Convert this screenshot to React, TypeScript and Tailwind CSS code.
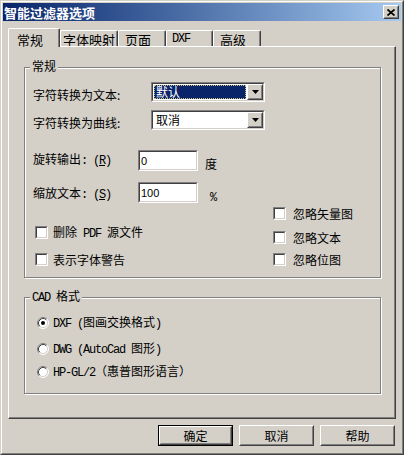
import React from "react";

function Lat({ children }: { children: React.ReactNode }) {
  return (
    <span className="font-['Liberation_Mono',monospace] text-[12px] tracking-[-1.2px]">
      {children}
    </span>
  );
}

function Sunken({ className, children }: { className?: string; children?: React.ReactNode }) {
  return (
    <div className={"border border-t-[#808080] border-l-[#808080] border-r-white border-b-white " + (className || "")}>
      <div className="h-full w-full border border-t-[#404040] border-l-[#404040] border-r-[#d4d0c8] border-b-[#d4d0c8] bg-white">
        {children}
      </div>
    </div>
  );
}

function Raised({ className, children }: { className?: string; children?: React.ReactNode }) {
  return (
    <div className={"border border-t-white border-l-white border-r-[#404040] border-b-[#404040] bg-[#d4d0c8] " + (className || "")}>
      <div className="h-full w-full border border-t-[#d4d0c8] border-l-[#d4d0c8] border-r-[#808080] border-b-[#808080] flex items-center justify-center">
        {children}
      </div>
    </div>
  );
}

function Arrow() {
  return (
    <svg width="7" height="4" viewBox="0 0 7 4">
      <polygon points="0,0 7,0 3.5,4" fill="#000" />
    </svg>
  );
}

function Combo({ value, selected }: { value: string; selected?: boolean }) {
  return (
    <Sunken className="w-[114px] h-[20px]">
      <div className="flex h-full">
        <div className="flex-1 flex p-px">
          {selected ? (
            <div className="flex-1 flex items-center bg-[#0a246a] text-white border border-dotted border-[#c8c080] pl-px">
              {value}
            </div>
          ) : (
            <div className="flex-1 flex items-center pl-[2px]">{value}</div>
          )}
        </div>
        <Raised className="w-[16px] h-full">
          <Arrow />
        </Raised>
      </div>
    </Sunken>
  );
}

function TextBox({ value }: { value: string }) {
  return (
    <Sunken className="w-[60px] h-[21px] shrink-0">
      <div className="h-full flex items-center pl-px font-['Liberation_Sans',sans-serif] text-[11px]">{value}</div>
    </Sunken>
  );
}

function Check({ label, gap }: { label: React.ReactNode; gap: string }) {
  return (
    <div className="flex items-center h-[13px]">
      <Sunken className="w-[13px] h-[13px] shrink-0" />
      <div className={gap + " whitespace-nowrap"}>{label}</div>
    </div>
  );
}

function Radio({ checked, label }: { checked?: boolean; label: React.ReactNode }) {
  return (
    <div className="flex items-center h-[12px] pl-[12px]">
      <svg width="12" height="12" viewBox="0 0 12 12" className="shrink-0">
        <circle cx="6" cy="6" r="5" fill="#fff" />
        <path d="M2.11 9.89 A5.5 5.5 0 0 1 9.89 2.11" stroke="#808080" fill="none" strokeWidth="1" />
        <path d="M2.82 9.18 A4.5 4.5 0 0 1 9.18 2.82" stroke="#404040" fill="none" strokeWidth="1" />
        <path d="M9.89 2.11 A5.5 5.5 0 0 1 2.11 9.89" stroke="#ffffff" fill="none" strokeWidth="1" />
        <path d="M9.18 2.82 A4.5 4.5 0 0 1 2.82 9.18" stroke="#d4d0c8" fill="none" strokeWidth="1" />
        {checked && <circle cx="6" cy="6" r="2" fill="#000" />}
      </svg>
      <div className="ml-[4px] whitespace-nowrap">{label}</div>
    </div>
  );
}

function Group({ title, className, children }: { title: React.ReactNode; className?: string; children?: React.ReactNode }) {
  return (
    <div className={"relative border border-[#808080] shadow-[inset_1px_1px_0_#fff,1px_1px_0_#fff] " + (className || "")}>
      <div className="absolute left-[5px] top-[-9px] px-[2px] bg-[#d4d0c8] leading-[14px] whitespace-nowrap">{title}</div>
      {children}
    </div>
  );
}

function Button({ label, def }: { label: string; def?: boolean }) {
  if (def) {
    return (
      <div className="w-[75px] h-[21px] border border-black">
        <Raised className="w-full h-full">{label}</Raised>
      </div>
    );
  }
  return <Raised className="w-[75px] h-[21px]">{label}</Raised>;
}

export default function App() {
  return (
    <div className="w-[404px] h-[455px] bg-[#d4d0c8] border border-t-[#d4d0c8] border-l-[#d4d0c8] border-r-[#404040] border-b-[#404040] font-['Noto_Sans_CJK_SC',sans-serif] text-[12px] leading-[12px] text-black overflow-hidden">
      <div className="h-full border border-t-white border-l-white border-r-[#808080] border-b-[#808080] flex flex-col px-px pt-px">
        {/* Title bar */}
        <div className="h-[18px] shrink-0 flex items-center justify-between bg-linear-to-r from-[#0a246a] to-[#a6caf0] pl-px pr-[2px]">
          <span className="text-white font-bold text-[13px] leading-[13px]">智能过滤器选项</span>
          <Raised className="w-[16px] h-[14px]">
            <svg width="8" height="7" viewBox="0 0 8 7">
              <path d="M0.5 0.5 L7.5 6.5 M7.5 0.5 L0.5 6.5" stroke="#000" strokeWidth="1.7" />
            </svg>
          </Raised>
        </div>

        {/* Tabs */}
        <div className="mt-[7px] ml-[5px] h-[18px] flex items-end shrink-0">
          <div className="relative z-10 -mb-px h-[19px] w-[52px] bg-[#d4d0c8] border-l border-t border-r border-l-white border-t-white border-r-[#404040] shadow-[inset_-1px_0_0_#808080] rounded-t-[2px] text-[13px] leading-[13px] pl-[8px] pt-[4px]">
            常规
          </div>
          <div className="h-[16px] w-[58px] border-l border-t border-r border-l-white border-t-white border-r-[#404040] shadow-[inset_-1px_0_0_#808080] rounded-t-[2px] text-[13px] leading-[13px] flex justify-center pt-[2px]">
            字体映射
          </div>
          <div className="h-[16px] w-[48px] border-l border-t border-r border-l-white border-t-white border-r-[#404040] shadow-[inset_-1px_0_0_#808080] rounded-t-[2px] text-[13px] leading-[13px] flex justify-start pl-[6px] pt-[2px]">
            页面
          </div>
          <div className="h-[16px] w-[47px] border-l border-t border-r border-l-white border-t-white border-r-[#404040] shadow-[inset_-1px_0_0_#808080] rounded-t-[2px] text-[13px] leading-[13px] flex justify-start pl-[5px] pt-[2px]">
            <Lat>DXF</Lat>
          </div>
          <div className="h-[16px] w-[48px] border-l border-t border-r border-l-white border-t-white border-r-[#404040] shadow-[inset_-1px_0_0_#808080] rounded-t-[2px] text-[13px] leading-[13px] flex justify-start pl-[6px] pt-[2px]">
            高级
          </div>
        </div>

        {/* Panel */}
        <div className="ml-[5px] w-[388px] h-[373px] shrink-0 border border-l-white border-t-white border-r-[#404040] border-b-[#404040] shadow-[inset_-1px_-1px_0_#808080] flex flex-col">
          <Group title="常规" className="ml-[15px] mt-[20px] w-[357px] h-[211px] shrink-0">
            <div className="pl-[8px] pt-[14px] flex flex-col">
              <div className="flex h-[20px]">
                <div className="w-[118px] pt-[7px]">字符转换为文本:</div>
                <Combo value="默认" selected />
              </div>
              <div className="flex h-[20px] mt-[8px]">
                <div className="w-[118px] pt-[7px]">字符转换为曲线:</div>
                <Combo value="取消" />
              </div>
              <div className="flex h-[21px] mt-[20px]">
                <div className="w-[105px] pt-[3px] whitespace-nowrap">
                  旋转输出<Lat>: (<span className="underline">R</span>)</Lat>
                </div>
                <TextBox value="0" />
                <div className="ml-[7px] pt-[8px]">度</div>
              </div>
              <div className="flex h-[21px] mt-[11px]">
                <div className="w-[105px] pt-[5px] whitespace-nowrap">
                  缩放文本<Lat>: (<span className="underline">S</span>)</Lat>
                </div>
                <TextBox value="100" />
                <div className="ml-[12px] pt-[8px]">
                  <Lat>%</Lat>
                </div>
              </div>
              <div className="flex">
                <div className="ml-[2px] w-[238px] flex flex-col">
                  <div className="mt-[23px]">
                    <Check gap="ml-[5px]" label={<>删除<Lat> PDF </Lat>源文件</>} />
                  </div>
                  <div className="mt-[14px]">
                    <Check gap="ml-[5px]" label="表示字体警告" />
                  </div>
                </div>
                <div className="flex flex-col">
                  <div className="mt-[4px]">
                    <Check gap="ml-[7px]" label="忽略矢量图" />
                  </div>
                  <div className="mt-[11px]">
                    <Check gap="ml-[7px]" label="忽略文本" />
                  </div>
                  <div className="mt-[9px]">
                    <Check gap="ml-[7px]" label="忽略位图" />
                  </div>
                </div>
              </div>
            </div>
          </Group>

          <Group title={<><Lat>CAD </Lat>格式</>} className="ml-[15px] mt-[19px] w-[357px] h-[97px] shrink-0">
            <div className="flex flex-col">
              <div className="mt-[19px]">
                <Radio checked label={<><Lat>DXF (</Lat>图画交换格式<Lat>)</Lat></>} />
              </div>
              <div className="mt-[14px]">
                <Radio label={<><Lat>DWG (AutoCad </Lat>图形<Lat>)</Lat></>} />
              </div>
              <div className="mt-[11px]">
                <Radio label={<><Lat>HP-GL/2</Lat>（惠普图形语言）</>} />
              </div>
            </div>
          </Group>
        </div>

        {/* Buttons */}
        <div className="mt-[6px] flex justify-end gap-[6px] pr-[6px]">
          <Button label="确定" def />
          <Button label="取消" />
          <Button label="帮助" />
        </div>
      </div>
    </div>
  );
}
